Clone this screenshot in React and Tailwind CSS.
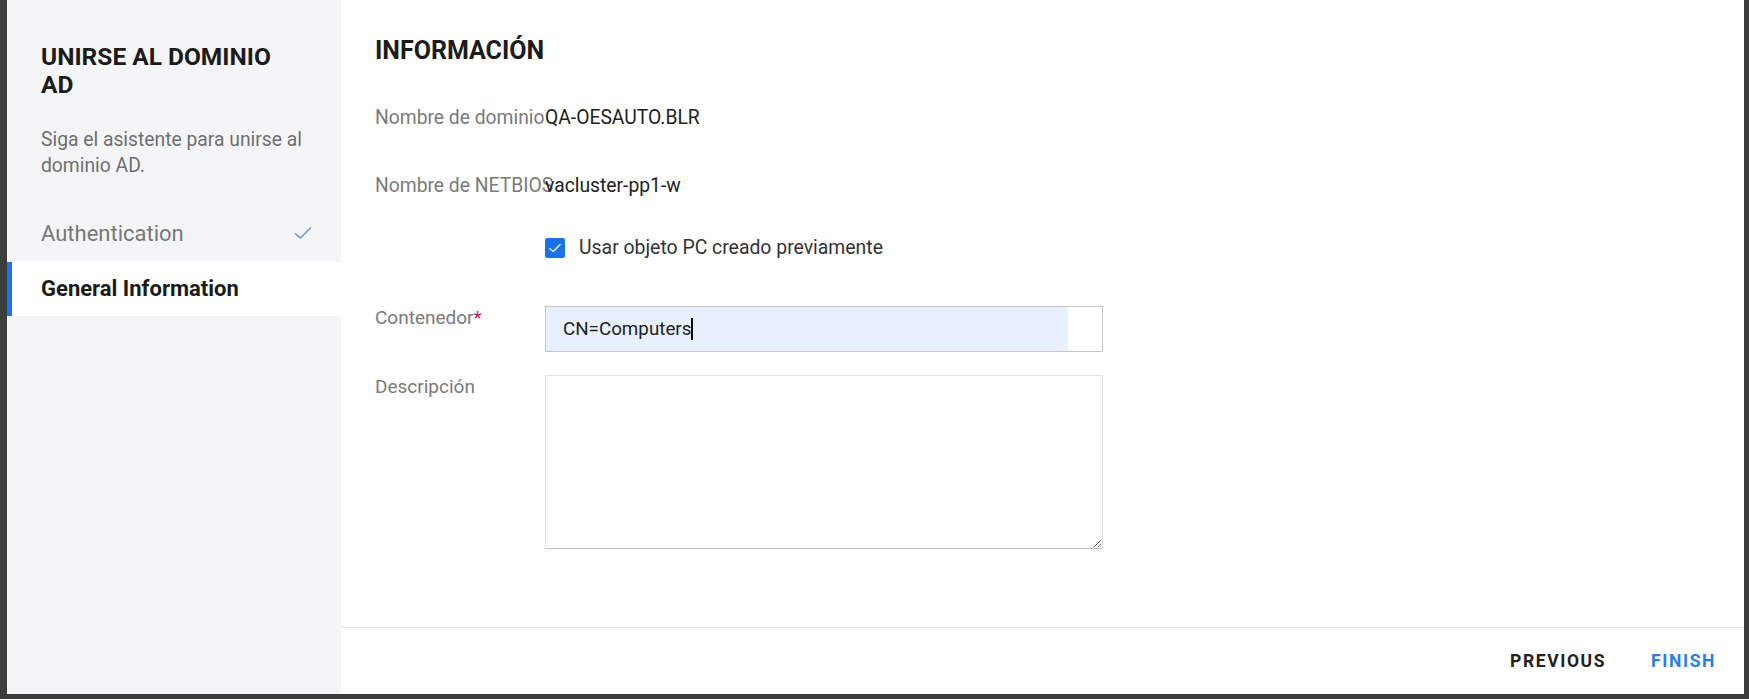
import React from 'react';

const Row = ({ label, value, className = '' }) => (
  <div className={`flex items-center h-[24px] text-[19.3px] leading-[24px] ${className}`}>
    <div className="w-[170px] shrink-0 whitespace-nowrap text-[#7a7a7a]">{label}</div>
    <div className="text-[#212121] whitespace-nowrap">{value}</div>
  </div>
);

const CheckIcon = ({ className }) => (
  <svg className={className} viewBox="0 0 24 24" fill="none" stroke="currentColor" strokeWidth={2} strokeLinecap="round" strokeLinejoin="round">
    <path d="M3 13l6 5L21 6" />
  </svg>
);

const App = () => {
  return (
    <div className="w-[1749px] h-[699px] bg-[#3d3d3d] flex pl-[7px] pr-[5px] pb-[5px] font-['Roboto',sans-serif]">
      <div className="flex flex-1 bg-white">
        {/* sidebar */}
        <div className="w-[334px] shrink-0 bg-[#f4f5f7] pt-[43px]">
          <div className="px-[34px]">
            <h1 className="text-[24.5px] leading-[28px] font-bold text-[#1b1b1b]">UNIRSE AL DOMINIO AD</h1>
            <p className="mt-[28px] text-[19.3px] leading-[25.5px] text-[#6f6f6f]">Siga el asistente para unirse al dominio AD.</p>
          </div>
          <div className="mt-[30px]">
            <div className="h-[54px] flex items-center justify-between pl-[34px] pr-[28px]">
              <span className="text-[22px] leading-[28px] text-[#777] -mt-[3px]">Authentication</span>
              <CheckIcon className="w-[20px] h-[20px] text-[#6b9be6] -mt-[4px]" />
            </div>
            <div className="h-[54px] flex items-center bg-white border-l-[5px] border-[#1a73e8] pl-[29px]">
              <span className="text-[22px] leading-[28px] font-bold text-[#1b1b1b]">General Information</span>
            </div>
          </div>
        </div>

        {/* main */}
        <div className="flex-1 flex flex-col">
          <div className="flex-1 pl-[34px] pt-[37px]">
            <h2 className="text-[25px] leading-[28px] font-bold text-[#1b1b1b]">INFORMACIÓN</h2>
            <Row className="mt-[41px]" label="Nombre de dominio" value="QA-OESAUTO.BLR" />
            <Row className="mt-[44px]" label="Nombre de NETBIOS" value="vacluster-pp1-w" />
            <div className="mt-[38px] h-[24px] flex items-center pl-[170px]">
              <div className="w-[20px] h-[20px] rounded-[2px] bg-[#1a73e8] flex items-center justify-center">
                <CheckIcon className="w-[14px] h-[14px] text-white" />
              </div>
              <span className="ml-[14px] text-[19.4px] text-[#333]">Usar objeto PC creado previamente</span>
            </div>
            <div className="mt-[46px] flex">
              <div className="w-[170px] shrink-0 text-[19px] leading-[24px] text-[#7a7a7a]">
                Contenedor<span className="text-[#c2185b]">*</span>
              </div>
              <div className="w-[558px] h-[46px] border border-[#c6c6c6] flex bg-white">
                <div className="flex-1 bg-[#e8f0fe] flex items-center pl-[17px] text-[18.8px] text-[#222]">
                  CN=Computers<span className="inline-block w-[1.5px] h-[22px] bg-black" />
                </div>
                <div className="w-[34px]" />
              </div>
            </div>
            <div className="mt-[23px] flex">
              <div className="w-[170px] shrink-0 text-[19px] leading-[24px] text-[#7a7a7a]">Descripción</div>
              <textarea className="w-[558px] h-[174px] border border-[#e3e3e3] border-b-[#bdbdbd] outline-none" />
            </div>
          </div>
          <div className="h-[67px] border-t border-[#e2e2e2] flex items-center justify-end gap-[45px] pr-[28px]">
            <button className="text-[17.5px] font-bold tracking-[1.6px] text-[#222]">PREVIOUS</button>
            <button className="text-[17.5px] font-bold tracking-[1.6px] text-[#2b7de9]">FINISH</button>
          </div>
        </div>
      </div>
    </div>
  );
};

export default App;
